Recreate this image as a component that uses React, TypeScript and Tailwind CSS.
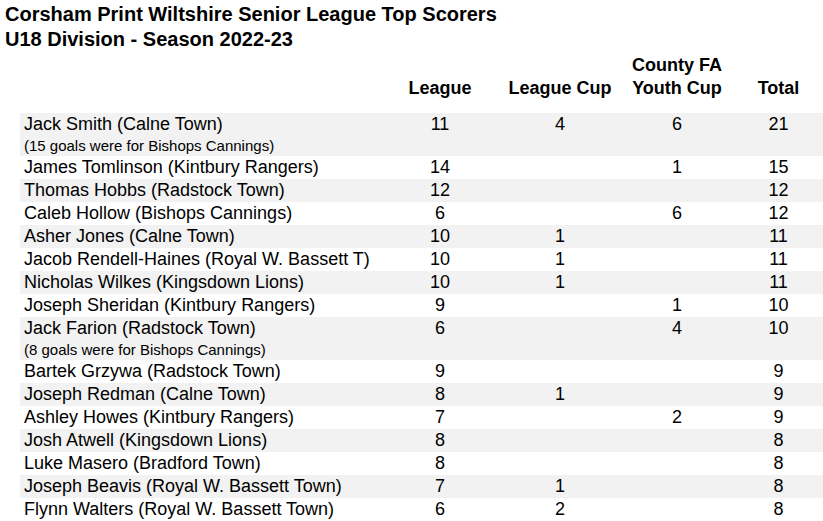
const rows: { name: string; note?: string; league?: number; cup?: number; county?: number; total: number }[] = [
  { name: "Jack Smith (Calne Town)", note: "(15 goals were for Bishops Cannings)", league: 11, cup: 4, county: 6, total: 21 },
  { name: "James Tomlinson (Kintbury Rangers)", league: 14, county: 1, total: 15 },
  { name: "Thomas Hobbs (Radstock Town)", league: 12, total: 12 },
  { name: "Caleb Hollow (Bishops Cannings)", league: 6, county: 6, total: 12 },
  { name: "Asher Jones (Calne Town)", league: 10, cup: 1, total: 11 },
  { name: "Jacob Rendell-Haines (Royal W. Bassett T)", league: 10, cup: 1, total: 11 },
  { name: "Nicholas Wilkes (Kingsdown Lions)", league: 10, cup: 1, total: 11 },
  { name: "Joseph Sheridan (Kintbury Rangers)", league: 9, county: 1, total: 10 },
  { name: "Jack Farion (Radstock Town)", note: "(8 goals were for Bishops Cannings)", league: 6, county: 4, total: 10 },
  { name: "Bartek Grzywa (Radstock Town)", league: 9, total: 9 },
  { name: "Joseph Redman (Calne Town)", league: 8, cup: 1, total: 9 },
  { name: "Ashley Howes (Kintbury Rangers)", league: 7, county: 2, total: 9 },
  { name: "Josh Atwell (Kingsdown Lions)", league: 8, total: 8 },
  { name: "Luke Masero (Bradford Town)", league: 8, total: 8 },
  { name: "Joseph Beavis (Royal W. Bassett Town)", league: 7, cup: 1, total: 8 },
  { name: "Flynn Walters (Royal W. Bassett Town)", league: 6, cup: 2, total: 8 },
];

export default function App() {
  return (
    <div className="w-[823px] h-[521px] overflow-hidden bg-white text-black font-['Liberation_Sans',Arial,sans-serif]">
      <div className="pl-[5px] pt-[2px] text-[20px] leading-[25px] font-bold">
        <div>Corsham Print Wiltshire Senior League Top Scorers</div>
        <div>U18 Division - Season 2022-23</div>
      </div>
      <table className="ml-[20px] border-collapse table-fixed w-[803px] text-[18px]">
        <colgroup>
          <col className="w-[360px]" />
          <col className="w-[120px]" />
          <col className="w-[120px]" />
          <col className="w-[114px]" />
          <col className="w-[89px]" />
        </colgroup>
        <thead>
          <tr className="font-bold leading-[23px] align-bottom">
            <th className="pb-[13px]"></th>
            <th className="pb-[13px] text-center">League</th>
            <th className="pb-[13px] text-center">League Cup</th>
            <th className="pt-[2px] pb-[13px] text-center whitespace-nowrap">
              County FA
              <br />
              Youth Cup
            </th>
            <th className="pb-[13px] text-center">Total</th>
          </tr>
        </thead>
        <tbody>
          {rows.map((r, i) => (
            <tr key={r.name} className={`align-top leading-[23px] ${i % 2 === 0 ? "bg-[#f2f2f2]" : "bg-white"}`}>
              <td className="pl-[4px] whitespace-nowrap">
                <div>{r.name}</div>
                {r.note && <div className="text-[15px] leading-[20px]">{r.note}</div>}
              </td>
              <td className="text-center">{r.league ?? ""}</td>
              <td className="text-center">{r.cup ?? ""}</td>
              <td className="text-center">{r.county ?? ""}</td>
              <td className="text-center">{r.total}</td>
            </tr>
          ))}
        </tbody>
      </table>
    </div>
  );
}
